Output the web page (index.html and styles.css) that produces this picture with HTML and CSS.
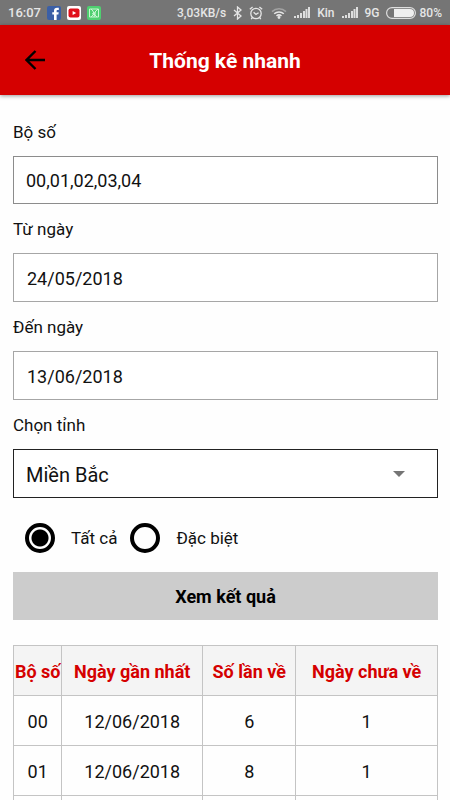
FILE: index.html
```html
<!DOCTYPE html>
<html lang="vi">
<head>
<meta charset="utf-8">
<meta name="viewport" content="width=device-width, initial-scale=1">
<title>Thống kê nhanh</title>
<link rel="stylesheet" href="styles.css">
</head>
<body>
<div class="app">
  <div class="status">
    <span class="clock">16:07</span>
    <svg class="app-icon" width="14" height="14" viewBox="0 0 14 14" aria-hidden="true"><rect width="14" height="14" rx="2" fill="#3b5fa6"/><path d="M7 14V8.600H5.300V6.300H7V4.800C7 2.900 8.100 1.800 10 1.800h1.800V4h-1.200c-.8 0-1 .4-1 1v1.300h2.100l-.3 2.300H9.600V14z" fill="#fff"/></svg>
    <svg class="app-icon" width="14" height="14" viewBox="0 0 14 14" aria-hidden="true"><rect width="14" height="14" rx="2" fill="#fff"/><rect x="1.500" y="2.500" width="11" height="9" rx="2" fill="#e00f1a"/><path d="M5.600 4.900v4.200L9.200 7z" fill="#fff"/></svg>
    <svg class="app-icon" width="14" height="14" viewBox="0 0 14 14" aria-hidden="true"><rect width="14" height="14" rx="2" fill="#4fd070"/><path d="M2.500 3h9v8h-9zM4 3l2 2 1 3-3 3M11 3L8 6l-1 5M5 8l2-1M8 6v3l2 2" fill="none" stroke="#c9f8d3" stroke-width="1"/></svg>
    <span class="speed">3,03KB/s</span>
    <svg class="bluetooth" width="9" height="14" viewBox="0 0 9 14" aria-hidden="true"><path d="M1 4l7 6-3.500 3V1L8 4l-7 6" fill="none" stroke="#e6e6e6" stroke-width="1.300"/></svg>
    <svg class="alarm" width="14" height="14" viewBox="0 0 14 14" aria-hidden="true"><g fill="none" stroke="#e6e6e6" stroke-width="1.300"><circle cx="7" cy="7.500" r="5.200"/><path d="M.8 3.200L3.600 1M13.200 3.200L10.400 1M4.600 6.200L7 8.400l2.600-1.700M3.400 11.500l-1.200 1.600M10.600 11.500l1.200 1.600"/></g></svg>
    <svg class="wifi" width="16" height="12" viewBox="0 0 16 12" aria-hidden="true"><g fill="none" stroke="#e6e6e6" stroke-width="1.500"><path d="M1 4.600a10 10 0 0 1 14 0" stroke="#a2a2a2"/><path d="M3.200 6.800a7 7 0 0 1 9.600 0M5.500 9a3.700 3.700 0 0 1 5 0"/></g><circle cx="8" cy="10.500" r="1.400" fill="#e6e6e6"/></svg>
    <svg class="signal" width="16" height="11" viewBox="0 0 16 11" aria-hidden="true"><path d="M0 9h2v2H0zM3 8h2v3H3zM6 6h2v5H6zM9 4h2v7H9zM11.500 2h2v9h-2zM14 0h2v11h-2z" fill="#dedede"/></svg>
    <span class="carrier">Kin</span>
    <svg class="signal" width="16" height="11" viewBox="0 0 16 11" aria-hidden="true"><path d="M0 9h2v2H0zM3 8h2v3H3zM6 6h2v5H6zM9 4h2v7H9zM11.500 2h2v9h-2zM14 0h2v11h-2z" fill="#dedede"/></svg>
    <span class="network">9G</span>
    <svg class="battery" width="30" height="12" viewBox="0 0 30 12" aria-hidden="true"><rect x=".6" y=".6" width="28.800" height="10.800" rx="5.400" fill="none" stroke="#dedede" stroke-width="1.200"/><path d="M8 2h16a4 4 0 0 1 0 8H8z" fill="#efefef"/></svg>
    <span>80%</span>
  </div>
  <header class="header">
    <button class="back" type="button" aria-label="Quay lại"><svg width="20" height="20" viewBox="0 0 20 20" aria-hidden="true"><path d="M20 10H2M10.500 1L1.500 10l9 9" fill="none" stroke="#000" stroke-width="2.400"/></svg></button>
    <h1 class="title">Thống kê nhanh</h1>
  </header>
  <main class="content">
    <form>
      <label class="label" for="numbers">Bộ số</label>
      <input class="field numbers" id="numbers" type="text" value="00,01,02,03,04">
      <label class="label" for="from">Từ ngày</label>
      <input class="field date" id="from" type="text" value="24/05/2018">
      <label class="label" for="to">Đến ngày</label>
      <input class="field date" id="to" type="text" value="13/06/2018">
      <label class="label" for="province">Chọn tỉnh</label>
      <div class="select-wrap">
        <select class="field province" id="province"><option>Miền Bắc</option></select>
        <svg class="caret" width="12" height="6" viewBox="0 0 12 6" aria-hidden="true"><path d="M0 0h12L6 6z" fill="#757575"/></svg>
      </div>
      <div class="options">
        <label class="option"><input class="radio" type="radio" name="kind" checked>Tất cả</label>
        <label class="option"><input class="radio" type="radio" name="kind">Đặc biệt</label>
      </div>
      <button class="submit" type="button">Xem kết quả</button>
    </form>
    <table class="results">
      <colgroup><col class="col-number"><col class="col-latest"><col class="col-count"><col class="col-days"></colgroup>
      <thead><tr><th>Bộ số</th><th>Ngày gần nhất</th><th>Số lần về</th><th>Ngày chưa về</th></tr></thead>
      <tbody>
        <tr><td>00</td><td>12/06/2018</td><td>6</td><td>1</td></tr>
        <tr><td>01</td><td>12/06/2018</td><td>8</td><td>1</td></tr>
        <tr><td></td><td></td><td></td><td></td></tr>
      </tbody>
    </table>
  </main>
</div>
</body>
</html>
```
FILE: styles.css
```css
* {
  box-sizing: border-box;
}

body {
  margin: 0;
  background: #fefefe;
  color: #111;
  font: 17px/24px Roboto, sans-serif;
}

.app {
  height: 100vh;
  overflow: hidden;
}

.status {
  display: flex;
  align-items: center;
  height: 25px;
  padding: 0 8px;
  background: #757575;
  color: #e6e6e6;
  font-size: 12px;
  font-weight: 500;
  white-space: nowrap;
}

.status svg {
  flex: none;
}

.clock {
  font-size: 13px;
}

.app-icon {
  margin-left: 6px;
}

.speed {
  margin-left: auto;
}

.bluetooth,
.alarm,
.signal,
.carrier,
.network {
  margin-left: 7px;
}

.wifi {
  margin-left: 8px;
}

.battery {
  margin: 0 4px 0 6px;
}

.header {
  display: grid;
  grid-template-columns: 70px 1fr 70px;
  align-items: center;
  height: 70px;
  background: #d50000;
  box-shadow: 0 1px 4px rgba(0, 0, 0, 0.4);
}

.back {
  display: flex;
  align-items: center;
  justify-content: center;
  height: 70px;
  padding: 0;
  border: 0;
  background: none;
}

.title {
  margin: 0;
  padding-top: 2px;
  color: #fff;
  font-size: 21px;
  font-weight: 700;
  text-align: center;
}

.content {
  padding: 12px 12px 0 13px;
}

.label {
  display: block;
  padding: 13px 0 12px;
}

.field {
  display: block;
  width: 100%;
  height: 48px;
  padding: 0 12px;
  border: 1px solid #8c8c8c;
  border-radius: 0;
  background: #fff;
  color: #111;
  font: inherit;
}

.numbers {
  font-size: 18px;
}

.date {
  height: 49px;
  padding: 2px 13px 0;
  border-color: #a6a6a6;
  font-size: 18px;
}

.select-wrap {
  position: relative;
}

.province {
  appearance: none;
  height: 49px;
  padding-top: 2px;
  border-color: #222;
  font-size: 20px;
}

.caret {
  position: absolute;
  top: 22px;
  right: 33px;
  pointer-events: none;
}

.options {
  display: flex;
  gap: 13px;
  padding: 25px 12px 19px;
}

.option {
  display: flex;
  align-items: center;
  gap: 16px;
}

.radio {
  appearance: none;
  width: 30px;
  height: 30px;
  margin: 0;
  border: 4px solid #000;
  border-radius: 50%;
}

.radio:checked {
  background: radial-gradient(circle, #000 8px, #fff 9px);
}

.submit {
  display: block;
  width: 100%;
  height: 48px;
  padding: 2px 0 0;
  border: 0;
  background: #ccc;
  color: #000;
  font: inherit;
  font-size: 18px;
  font-weight: 700;
}

.results {
  width: 100%;
  margin-top: 25px;
  border-collapse: collapse;
  table-layout: fixed;
}

.col-number {
  width: 11.4%;
}

.col-latest {
  width: 33.2%;
}

.col-count {
  width: 22%;
}

.results th,
.results td {
  height: 50px;
  padding: 2px 0 0;
  border: 1px solid #c4c4c4;
  font-size: 18px;
  text-align: center;
  white-space: nowrap;
}

.results th {
  background: #f4f4f4;
  color: #d50000;
}
```
